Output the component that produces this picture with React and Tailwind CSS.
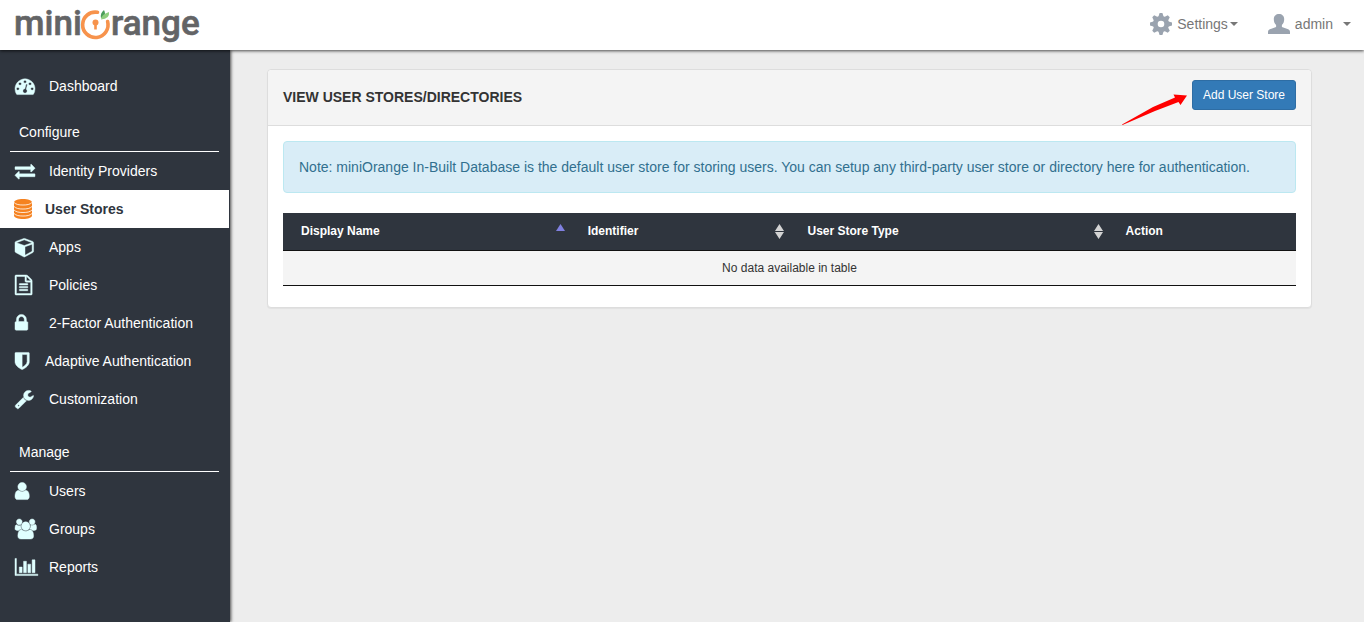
import React from 'react';

const Icon = ({ path, left = 0, units = 1792, className = 'text-[#e0ffff]' }) => (
    <svg
        aria-hidden="true"
        viewBox={`${left} 0 ${units} 1792`}
        className={`h-5 w-auto shrink-0 overflow-visible ${className}`}
        fill="currentColor"
        stroke="currentColor"
        strokeWidth="40"
    >
        <path d={path} />
    </svg>
);

const ICONS = {
    dashboard: {
        path: 'M384 1152q0-53-37.5-90.5t-90.5-37.5-90.5 37.5-37.5 90.5 37.5 90.5 90.5 37.5 90.5-37.5 37.5-90.5zm192-448q0-53-37.5-90.5t-90.5-37.5-90.5 37.5-37.5 90.5 37.5 90.5 90.5 37.5 90.5-37.5 37.5-90.5zm428 481l101-382q6-26-7.5-48.5t-38.5-29.5-48 6.5-30 39.5l-101 382q-60 5-107 43.5t-63 98.5q-20 77 20 146t117 89 146-20 89-117q16-60-6-117t-72-91zm660-33q0-53-37.5-90.5t-90.5-37.5-90.5 37.5-37.5 90.5 37.5 90.5 90.5 37.5 90.5-37.5 37.5-90.5zm-640-640q0-53-37.5-90.5t-90.5-37.5-90.5 37.5-37.5 90.5 37.5 90.5 90.5 37.5 90.5-37.5 37.5-90.5zm448 192q0-53-37.5-90.5t-90.5-37.5-90.5 37.5-37.5 90.5 37.5 90.5 90.5 37.5 90.5-37.5 37.5-90.5zm320 448q0 261-141 483-19 29-54 29h-1402q-35 0-54-29-141-221-141-483 0-182 71-348t191-286 286-191 348-71 348 71 286 191 191 286 71 348z',
    },
    exchange: {
        path: 'M1792 1184v192q0 13-9.5 22.5t-22.5 9.5h-1376v192q0 13-9.5 22.5t-22.5 9.5q-12 0-24-10l-319-320q-9-9-9-22 0-14 9-23l320-320q9-9 23-9 13 0 22.5 9.5t9.5 22.5v192h1376q13 0 22.5 9.5t9.5 22.5zm0-544q0 14-9 23l-320 320q-9 9-23 9-13 0-22.5-9.5t-9.5-22.5v-192h-1376q-13 0-22.5-9.5t-9.5-22.5v-192q0-13 9.5-22.5t22.5-9.5h1376v-192q0-14 9-23t23-9q12 0 24 10l319 319q9 9 9 23z',
    },
    cube: {
        units: 1664,
        path: 'M896 1629l640-349v-636l-640 233v752zm-64-865l698-254-698-254-698 254zm832-252v768q0 35-18 65t-49 47l-704 384q-28 16-61 16t-61-16l-704-384q-31-17-49-47t-18-65v-768q0-40 23-73t61-47l704-256q22-8 44-8t44 8l704 256q38 14 61 47t23 73z',
    },
    file: {
        left: 128,
        units: 1536,
        path: 'M1596 380q28 28 48 76t20 88v1152q0 40-28 68t-68 28h-1344q-40 0-68-28t-28-68v-1600q0-40 28-68t68-28h896q40 0 88 20t76 48zm-444-244v376h376q-10-29-22-41l-313-313q-12-12-41-22zm384 1528v-1024h-416q-40 0-68-28t-28-68v-416h-768v1536h1280zm-1024-864q0-14 9-23t23-9h704q14 0 23 9t9 23v64q0 14-9 23t-23 9h-704q-14 0-23-9t-9-23v-64zm736 224q14 0 23 9t9 23v64q0 14-9 23t-23 9h-704q-14 0-23-9t-9-23v-64q0-14 9-23t23-9h704zm0 256q14 0 23 9t9 23v64q0 14-9 23t-23 9h-704q-14 0-23-9t-9-23v-64q0-14 9-23t23-9h704z',
    },
    lock: {
        left: 320,
        units: 1152,
        path: 'M640 768h512v-192q0-106-75-181t-181-75-181 75-75 181v192zm832 96v576q0 40-28 68t-68 28h-960q-40 0-68-28t-28-68v-576q0-40 28-68t68-28h32v-192q0-184 132-316t316-132 316 132 132 316v192h32q40 0 68 28t28 68z',
    },
    shield: {
        left: 256,
        units: 1280,
        path: 'M1344 960v-640h-448v1137q119-63 213-137 235-184 235-360zm192-768v768q0 86-33.5 170.5t-83 150-118 127.5-126.5 103-121 77.5-89.5 49.5-42.5 20q-12 6-26 6t-26-6q-16-7-42.5-20t-89.5-49.5-121-77.5-126.5-103-118-127.5-83-150-33.5-170.5v-768q0-26 19-45t45-19h1152q26 0 45 19t19 45z',
    },
    wrench: {
        left: 64,
        units: 1664,
        path: 'M448 1472q0-26-19-45t-45-19-45 19-19 45 19 45 45 19 45-19 19-45zm644-420l-682 682q-37 37-90 37-52 0-91-37l-106-108q-38-36-38-90 0-53 38-91l681-681q39 98 114.5 173.5t173.5 114.5zm634-435q0 39-23 106-47 134-164.5 217.5t-258.5 83.5q-185 0-316.5-131.5t-131.5-316.5 131.5-316.5 316.5-131.5q58 0 121.5 16.5t107.5 46.5q16 11 16 28t-16 28l-293 169v224l193 107q5-3 79-48.5t135.5-81 70.5-35.5q15 0 23.5 10t8.5 25z',
    },
    user: {
        left: 256,
        units: 1280,
        path: 'M1536 1399q0 109-62.5 187t-150.5 78h-854q-88 0-150.5-78t-62.5-187q0-85 8.5-160.5t31.5-152 58.5-131 94-89 134.5-34.5q131 128 313 128t313-128q76 0 134.5 34.5t94 89 58.5 131 31.5 152 8.5 160.5zm-256-887q0 159-112.5 271.5t-271.5 112.5-271.5-112.5-112.5-271.5 112.5-271.5 271.5-112.5 271.5 112.5 112.5 271.5z',
    },
    users: {
        left: -64,
        units: 1920,
        path: 'M529 896q-162 5-265 128h-134q-82 0-138-40.5t-56-118.5q0-353 124-353 6 0 43.5 21t97.5 42.5 119 21.5q67 0 133-23-5 37-5 66 0 159 93 293zm1071 637q0 120-73 189.5t-194 69.5h-874q-121 0-194-69.5t-73-189.5q0-53 3.5-103.5t14-109 26.5-108.5 43-97.5 62-81 85.5-53.5 111.5-20q10 0 43 21.5t73 48 107 48 135 21.5 135-21.5 107-48 73-48 43-21.5q61 0 111.5 20t85.5 53.5 62 81 43 97.5 26.5 108.5 14 109 3.5 103.5zm-1024-1277q0 106-75 181t-181 75-181-75-75-181 75-181 181-75 181 75 75 181zm704 384q0 159-112.5 271.5t-271.5 112.5-271.5-112.5-112.5-271.5 112.5-271.5 271.5-112.5 271.5 112.5 112.5 271.5zm576 225q0 78-56 118.5t-138 40.5h-134q-103-123-265-128 93-134 93-293 0-29-5-66 66 23 133 23 59 0 119-21.5t97.5-42.5 43.5-21q124 0 124 353zm-128-609q0 106-75 181t-181 75-181-75-75-181 75-181 181-75 181 75 75 181z',
    },
    chart: {
        units: 2048,
        path: 'M640 896v512h-256v-512h256zm384-512v1024h-256v-1024h256zm1024 1152v128h-2048v-1536h128v1408h1920zm-640-896v768h-256v-768h256zm384-384v1152h-256v-1152h256z',
    },
};

const DatabaseIcon = () => (
    <svg aria-hidden="true" width="18" height="20" viewBox="0 0 18 20">
        <path d="M0 3.500C0 1.500 4 0 9 0s9 1.500 9 3.500v13C18 18.500 14 20 9 20s-9-1.500-9-3.500z" fill="#f58220" />
        <path
            d="M0 3.500c2 2 5 2.500 9 2.500s7-.5 9-2.500M0 7.500c2 2 5 2.500 9 2.500s7-.5 9-2.500M0 11c2 2 5 2.500 9 2.500s7-.5 9-2.500M0 14.500C2 16.500 5 17 9 17s7-.5 9-2.500"
            fill="none"
            stroke="#fff"
            strokeWidth="0.800"
        />
    </svg>
);

const CONFIGURE = [
    { label: 'Identity Providers', icon: 'exchange' },
    { label: 'User Stores', icon: 'database', active: true },
    { label: 'Apps', icon: 'cube' },
    { label: 'Policies', icon: 'file' },
    { label: '2-Factor Authentication', icon: 'lock' },
    { label: 'Adaptive Authentication', icon: 'shield', tight: true },
    { label: 'Customization', icon: 'wrench' },
];

const MANAGE = [
    { label: 'Users', icon: 'user' },
    { label: 'Groups', icon: 'users' },
    { label: 'Reports', icon: 'chart' },
];

const NavItem = ({ label, icon, active, tight }) => (
    <li>
        <a
            href="#"
            className={`flex h-[38px] items-center text-sm ${
                active ? 'mr-px bg-white pl-[14px] font-bold text-[#2f353e]' : 'pl-[15px] text-white'
            }`}
        >
            <span className={`flex shrink-0 ${active ? 'w-[31px]' : tight ? 'w-[30px]' : 'w-[34px]'}`}>
                {icon === 'database' ? <DatabaseIcon /> : <Icon {...ICONS[icon]} />}
            </span>
            {label}
        </a>
    </li>
);

const NavHeading = ({ children }) => (
    <h2 className="ml-[10px] mr-[11px] border-b border-white pb-[9px] pl-[9px] text-sm leading-5 text-white">{children}</h2>
);

const Logo = () => (
    <a href="#" aria-label="miniOrange" className="ml-[14px] block">
        <svg width="200" height="44" viewBox="0 0 200 44">
            <g
                fill="#636466"
                stroke="#636466"
                strokeWidth="0.600"
                strokeLinejoin="round"
                fontFamily="Roboto, sans-serif"
                fontWeight="500"
                fontSize="35"
            >
                <text x="0" y="32">mini</text>
                <text x="97" y="32">range</text>
            </g>
            <path d="M83.500 9.300A12.700 12.700 0 1 0 93.600 18.500" fill="none" stroke="#f7934c" strokeWidth="3.600" strokeLinecap="round" />
            <circle cx="81.500" cy="19.500" r="3" fill="#f7934c" />
            <path d="M80.200 20h2.600v6.500h-2.600z" fill="#f7934c" />
            <path d="M87 15q-1-5 3-8q2 4 0 7z" fill="#4a9d5b" />
            <path d="M87 16.500q0-5 8-7.500q1 7-8 7.500z" fill="#8fce7d" />
        </svg>
    </a>
);

const Caret = () => (
    <svg aria-hidden="true" width="8" height="4" viewBox="0 0 8 4" fill="#777">
        <path d="M0 0h8L4 4z" />
    </svg>
);

const TEETH = [0, 45, 90, 135, 180, 225, 270, 315];

const GearIcon = () => (
    <svg aria-hidden="true" width="22" height="22" viewBox="0 0 22 22" className="mr-[5px]" fill="#9aa3af">
        <circle cx="11" cy="11" r="5.700" fill="none" stroke="#9aa3af" strokeWidth="4.800" />
        {TEETH.map((angle) => (
            <path key={angle} d="M8.200 4.200L9.600 0h2.800l1.400 4.200z" transform={`rotate(${angle} 11 11)`} />
        ))}
    </svg>
);

const Header = () => (
    <header className="relative z-10 flex h-[50px] items-center justify-between bg-white shadow-[0_1px_3px_rgba(0,0,0,0.7)]">
        <Logo />
        <nav className="flex items-center pb-[2px] pr-[13px] text-sm text-[#777]">
            <button className="flex items-center">
                <GearIcon />
                Settings
                <span className="ml-[2px]"><Caret /></span>
            </button>
            <button className="ml-[30px] flex items-center">
                <svg aria-hidden="true" width="22" height="20" viewBox="0 0 22 20" className="mr-[5px]" fill="#9aa3af">
                    <path d="M11 0c3 0 5.200 2 5.200 5 0 2.500-.7 4.500-2.300 6v2l6.300 2.200q1.800.7 1.800 2.500V20H0v-2.300q0-1.800 1.800-2.500L8.100 13v-2C6.500 9.500 5.800 7.500 5.800 5c0-3 2.200-5 5.200-5z" />
                </svg>
                admin
                <span className="ml-[10px]"><Caret /></span>
            </button>
        </nav>
    </header>
);

const Sidebar = () => (
    <aside className="relative w-[230px] shrink-0 bg-[#2f353e] pt-[17px] shadow-[1px_0_3px_rgba(0,0,0,0.7)]">
        <nav>
            <ul className="mb-[17px]">
                <NavItem label="Dashboard" icon="dashboard" />
            </ul>
            <NavHeading>Configure</NavHeading>
            <ul className="mb-6">
                {CONFIGURE.map((item) => <NavItem key={item.label} {...item} />)}
            </ul>
            <NavHeading>Manage</NavHeading>
            <ul>
                {MANAGE.map((item) => <NavItem key={item.label} {...item} />)}
            </ul>
        </nav>
    </aside>
);

const SortIcon = ({ sorted }) => (
    <svg aria-hidden="true" width="9" height="15" viewBox="0 0 9 15" className="shrink-0">
        {sorted ? (
            <path d="M4.500 0L9 7H0z" fill="#8080e0" />
        ) : (
            <path d="M4.500 0L9 7H0zM0 8h9l-4.500 7z" fill="#d3d3d3" />
        )}
    </svg>
);

const COLUMNS = [
    { label: 'Display Name', width: 'w-[28.3%]', sort: 'asc' },
    { label: 'Identifier', width: 'w-[21.7%]', sort: 'both' },
    { label: 'User Store Type', width: 'w-[31.4%]', sort: 'both' },
    { label: 'Action', width: 'w-[18.6%]' },
];

const UserStoreTable = () => (
    <table className="w-full table-fixed border-collapse text-xs">
        <thead>
            <tr className="h-[37px] border-b border-[#111] bg-[#2f353e] text-white">
                {COLUMNS.map(({ label, width, sort }) => (
                    <th key={label} className={`${width} pl-[18px] pr-[5px] text-left font-bold`}>
                        <div className="flex items-center justify-between">
                            {label}
                            {sort && <SortIcon sorted={sort === 'asc'} />}
                        </div>
                    </th>
                ))}
            </tr>
        </thead>
        <tbody>
            <tr className="h-[35px] border-b border-[#111] bg-[#f4f4f4]">
                <td colSpan={4} className="text-center">No data available in table</td>
            </tr>
        </tbody>
    </table>
);

const App = () => (
    <div className="flex min-h-screen flex-col bg-[#ededed] font-['Liberation_Sans',Arial,sans-serif] text-[#333]">
        <Header />
        <div className="flex flex-1">
            <Sidebar />
            <main className="min-w-0 flex-1 pb-5 pl-[37px] pr-[52px] pt-[19px]">
                <section className="rounded border border-[#ddd] bg-white shadow-[0_1px_1px_rgba(0,0,0,0.05)]">
                    <div className="flex items-start justify-between rounded-t border-b border-[#ddd] bg-[#f4f4f4] px-[15px] pb-[15px] pt-[10px]">
                        <h1 className="pt-[7px] text-sm font-bold leading-5">VIEW USER STORES/DIRECTORIES</h1>
                        <div className="relative">
                            <button className="h-[30px] rounded-[3px] border border-[#2e6da4] bg-[#337ab7] px-[10px] text-xs text-white">
                                Add User Store
                            </button>
                            <svg
                                aria-hidden="true"
                                className="absolute right-full top-[14px] mr-[5px]"
                                width="66"
                                height="32"
                                viewBox="0 0 66 32"
                                fill="#f00"
                            >
                                <path d="M1 30.500L32 13l22-9.500L52.500 .5 66 1.500 59.500 11 57.500 8 34 17 1.500 31z" />
                            </svg>
                        </div>
                    </div>
                    <div className="px-[15px] pb-[21px] pt-[15px]">
                        <p className="mb-5 rounded border border-[#bce8f1] bg-[#d9edf7] p-[15px] text-sm leading-5 text-[#31708f]">
                            Note: miniOrange In-Built Database is the default user store for storing users. You can setup any
                            third-party user store or directory here for authentication.
                        </p>
                        <UserStoreTable />
                    </div>
                </section>
            </main>
        </div>
    </div>
);

export default App;
